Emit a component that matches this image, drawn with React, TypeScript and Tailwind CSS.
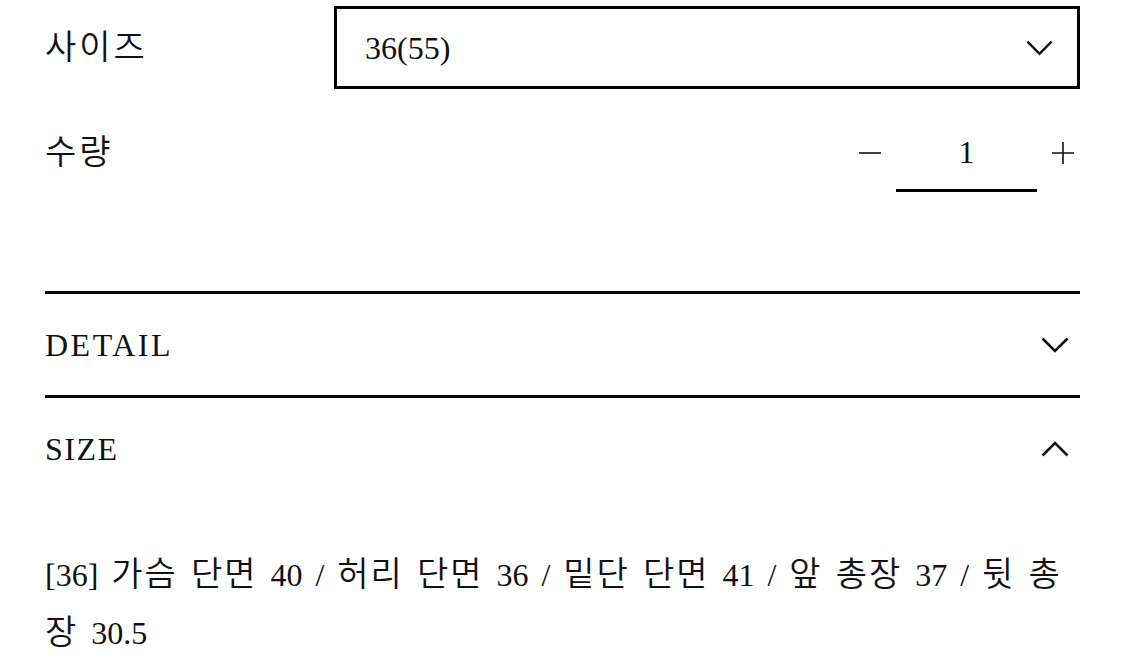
import { useState } from 'react';

const font = "font-['Liberation_Serif','Noto_Sans_CJK_KR',serif]";

function Chevron({ up = false, className = '' }: { up?: boolean; className?: string }) {
  return (
    <svg viewBox="0 0 28 16" className={className} fill="none" stroke="currentColor" strokeWidth={2.6}>
      {up ? <path d="M1.5 14.5 L14 2 L26.5 14.5" /> : <path d="M1.5 1.5 L14 14 L26.5 1.5" />}
    </svg>
  );
}

// Hangul runs get a little tracking and a lighter weight, like the reference's Korean face
function Mixed({ text }: { text: string }) {
  const parts = text.split(/([\uAC00-\uD7A3]+)/);
  return (
    <>
      {parts.map((p, i) =>
        /[\uAC00-\uD7A3]/.test(p) ? (
          <span key={i} className="text-[34px] font-[350] tracking-[2px]">
            {p}
          </span>
        ) : (
          p
        )
      )}
    </>
  );
}

export default function App() {
  const [qty, setQty] = useState(1);
  const [openDetail, setOpenDetail] = useState(false);
  const [openSize, setOpenSize] = useState(true);

  return (
    <div className={`${font} bg-white text-[#111] w-[1125px] h-[671px] overflow-hidden px-[45px]`}>
      {/* Size select */}
      <div className="flex items-center pt-[6px]">
        <div className="w-[289px] text-[34px] font-[350] tracking-[3px] leading-none">사이즈</div>
        <div className="flex-1 h-[83px] border-[3px] border-black flex items-center justify-between pl-[28px] pr-[24px]">
          <span className="text-[32px] leading-none">36(55)</span>
          <Chevron className="w-[27px] h-[16px]" />
        </div>
      </div>

      {/* Quantity */}
      <div className="flex items-center justify-between mt-[25px]">
        <div className="text-[34px] font-[350] tracking-[3px] leading-none">수량</div>
        <div className="flex items-center">
          <button onClick={() => setQty(Math.max(1, qty - 1))} className="w-[24px] h-[24px] flex items-center justify-center">
            <svg viewBox="0 0 24 24" className="w-[24px] h-[24px]" stroke="currentColor" strokeWidth={1.6}>
              <path d="M1 12 H23" />
            </svg>
          </button>
          <div className="w-[141px] h-[78px] ml-[14px] border-b-[3px] border-black flex items-center justify-center text-[32px] leading-none">
            {qty}
          </div>
          <button onClick={() => setQty(qty + 1)} className="w-[24px] h-[24px] ml-[14px] mr-[5px] flex items-center justify-center">
            <svg viewBox="0 0 24 24" className="w-[24px] h-[24px]" stroke="currentColor" strokeWidth={1.6}>
              <path d="M1 12 H23 M12 1 V23" />
            </svg>
          </button>
        </div>
      </div>

      {/* Accordion */}
      <div className="mt-[99px]">
        <div className="border-t-[3px] border-black">
          <button
            onClick={() => setOpenDetail(!openDetail)}
            className="w-full h-[101px] flex items-center justify-between pr-[11px]"
          >
            <span className="text-[32px] leading-none tracking-[2.5px]">DETAIL</span>
            <Chevron up={openDetail} className="w-[28px] h-[16px]" />
          </button>
        </div>
        <div className="border-t-[3px] border-black">
          <button
            onClick={() => setOpenSize(!openSize)}
            className="w-full h-[101px] flex items-center justify-between pr-[11px]"
          >
            <span className="text-[32px] leading-none tracking-[1.5px]">SIZE</span>
            <Chevron up={openSize} className="w-[28px] h-[16px]" />
          </button>
          {openSize && (
            <p className="pt-[47px] text-[32px] leading-[57px] [word-spacing:5px]">
              <Mixed text="[36] 가슴 단면 40 / 허리 단면 36 / 밑단 단면 41 / 앞 총장 37 / 뒷 총장 30.5" />
            </p>
          )}
        </div>
      </div>
    </div>
  );
}
